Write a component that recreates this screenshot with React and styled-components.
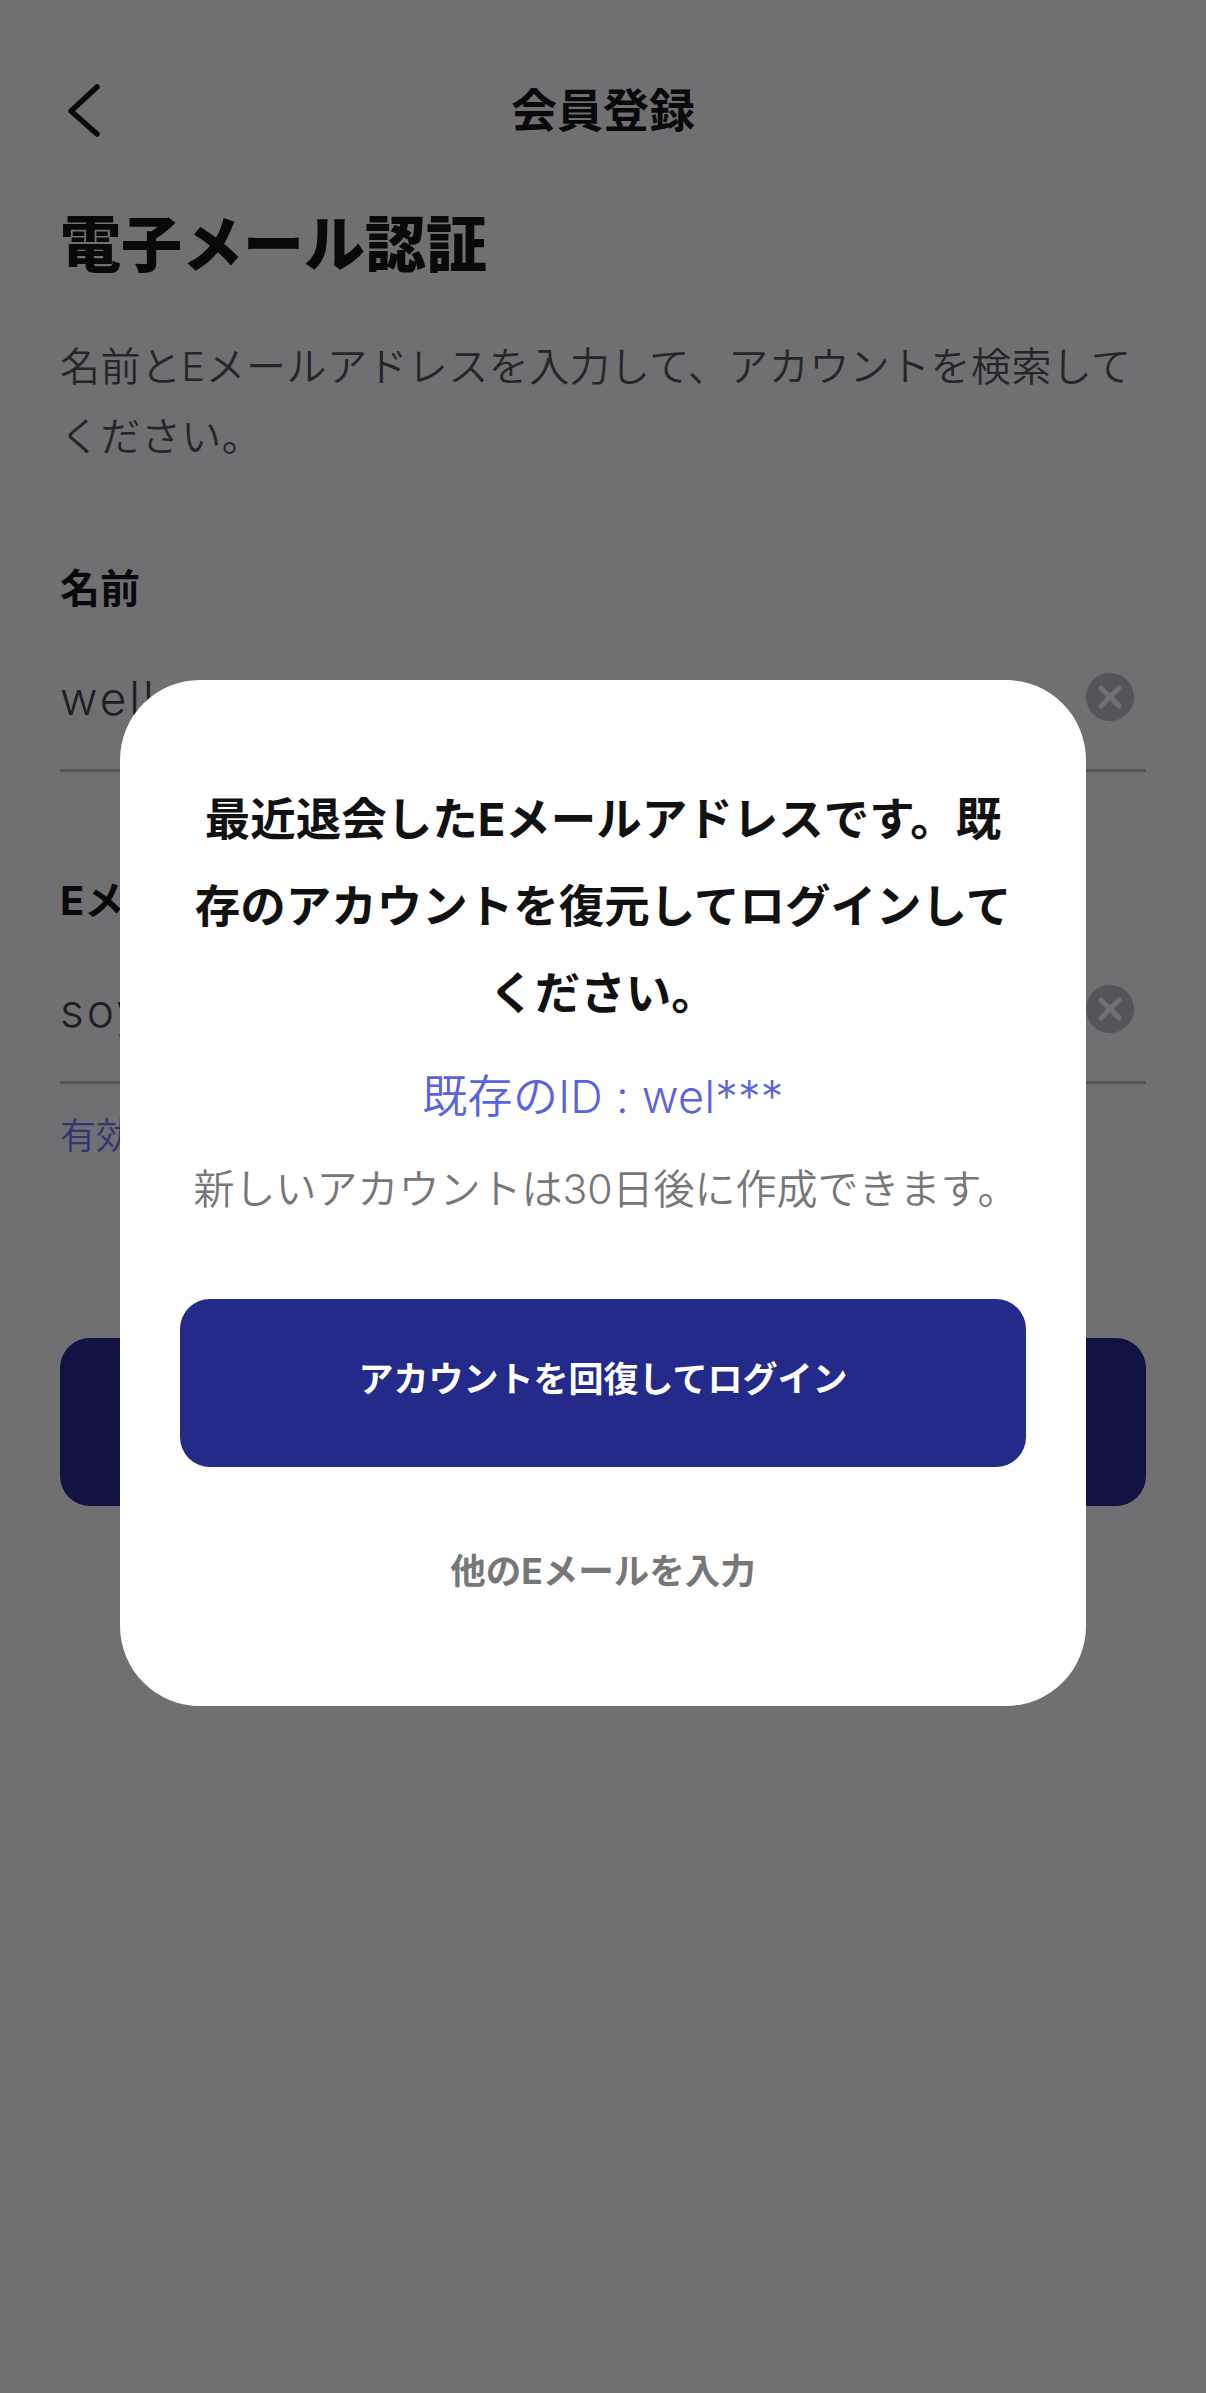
import React from 'react';
import styled, { createGlobalStyle } from 'styled-components';

const Global = createGlobalStyle`
  html, body { margin: 0; padding: 0; background: #fff; }
  * { box-sizing: border-box; }
  body { font-family: "Inter", "Noto Sans CJK JP", "Noto Sans", sans-serif; color: #111; }
`;

const Page = styled.div`
  position: relative;
  width: 1206px;
  height: 2393px;
  padding: 0 60px;
  background: #fff;
  overflow: hidden;
`;
const Header = styled.header`
  height: 90px;
  margin-top: 65px;
  display: grid;
  grid-template-columns: 80px 1fr 80px;
  align-items: center;
  margin-left: -60px;
  margin-right: -60px;
  padding: 0 60px;
`;
const BackIcon = styled.svg`
  width: 50px;
  height: 60px;
  display: block;
`;
const HeaderTitle = styled.h1`
  margin: 0;
  text-align: center;
  font-size: 46px;
  line-height: 90px;
  font-weight: 700;
  color: #111;
`;
const Heading = styled.h2`
  margin: 45px 0 0;
  font-size: 61px;
  line-height: 90px;
  font-weight: 900;
  color: #111;
`;
const Sub = styled.p`
  margin: 42px 0 0;
  font-size: 40px;
  line-height: 70px;
  font-weight: 350;
  color: #555;
  letter-spacing: 0.45px;
`;
const Field = styled.div`
  margin-top: ${p => p.$top}px;
`;
const Label = styled.div`
  font-size: 40px;
  line-height: 56px;
  font-weight: 700;
  color: #111;
`;
const InputRow = styled.div`
  height: 146px;
  display: flex;
  align-items: center;
  justify-content: space-between;
  padding-right: 12px;
  border-bottom: 3px solid #c0c0c0;
  margin-top: 9px;
`;
const Value = styled.span`
  font-family: "Inter", sans-serif;
  font-size: 46px;
  font-weight: 300;
  color: #444;
  letter-spacing: 3px;
`;
const ClearIcon = styled.svg`
  width: 48px;
  height: 48px;
  display: block;
  margin-top: -2px;
`;
const Hint = styled.div`
  margin-top: 25px;
  font-size: 36px;
  line-height: 54px;
  font-weight: 350;
  color: #7078ff;
`;
const PrimaryBack = styled.button`
  display: block;
  width: 100%;
  height: 168px;
  margin-top: 175px;
  border: 0;
  border-radius: 30px;
  background: #242a8a;
  color: #fff;
  font: 700 36px "Noto Sans CJK JP", sans-serif;
`;
const Overlay = styled.div`
  position: absolute;
  inset: 0;
  background: rgba(4, 4, 8, 0.57);
  display: flex;
  justify-content: center;
  align-items: flex-start;
  padding-top: 680px;
`;
const Modal = styled.div`
  width: 966px;
  height: 1026px;
  padding: 96px 60px 0;
  background: #fff;
  border-radius: 80px;
  text-align: center;
`;
const ModalTitle = styled.div`
  padding: 0 6px;
  font-size: 45.5px;
  line-height: 87px;
  font-weight: 700;
  color: #111;
`;
const ExistingId = styled.div`
  margin-top: 25px;
  font-size: 45px;
  line-height: 70px;
  font-weight: 350;
  color: #5a63dc;
  letter-spacing: 0.3px;
`;
const Note = styled.div`
  margin-top: 22px;
  padding-left: 6px;
  font-size: 41px;
  line-height: 70px;
  font-weight: 350;
  color: #777;
  white-space: nowrap;
`;
const ModalButton = styled.button`
  display: block;
  width: 100%;
  height: 168px;
  margin-top: 75px;
  padding: 0 0 13px;
  border: 0;
  border-radius: 30px;
  background: #242a8a;
  color: #fff;
  font: 700 35px "Inter", "Noto Sans CJK JP", sans-serif;
`;
const TextButton = styled.button`
  display: block;
  width: 100%;
  margin-top: 75px;
  padding: 0;
  border: 0;
  background: none;
  color: #777;
  font: 700 35.5px/60px "Inter", "Noto Sans CJK JP", sans-serif;
`;

const Clear = () => (
  <ClearIcon viewBox="0 0 48 48">
    <circle cx="24" cy="24" r="24" fill="#c0c0c4" />
    <path d="M15 15 L33 33 M33 15 L15 33" stroke="#fff" strokeWidth="5" strokeLinecap="round" />
  </ClearIcon>
);

export default function App() {
  return (
    <Page>
      <Global />
      <Header>
        <BackIcon viewBox="0 0 50 60">
          <path d="M37 7 L11 31 L37 54" fill="none" stroke="#111" strokeWidth="5.5" strokeLinecap="round" strokeLinejoin="round" />
        </BackIcon>
        <HeaderTitle>会員登録</HeaderTitle>
        <span />
      </Header>
      <Heading>電子メール認証</Heading>
      <Sub>名前とEメールアドレスを入力して、アカウントを検索してください。</Sub>
      <Field $top={89}>
        <Label>名前</Label>
        <InputRow>
          <Value>wellness</Value>
          <Clear />
        </InputRow>
      </Field>
      <Field $top={101}>
        <Label>Eメール</Label>
        <InputRow>
          <Value>soyeon</Value>
          <Clear />
        </InputRow>
        <Hint>有効なEメールアドレスです。</Hint>
      </Field>
      <PrimaryBack>次へ</PrimaryBack>
      <Overlay>
        <Modal>
          <ModalTitle>最近退会したEメールアドレスです。既存のアカウントを復元してログインしてください。</ModalTitle>
          <ExistingId>既存のID : wel***</ExistingId>
          <Note>新しいアカウントは30日後に作成できます。</Note>
          <ModalButton>アカウントを回復してログイン</ModalButton>
          <TextButton>他のEメールを入力</TextButton>
        </Modal>
      </Overlay>
    </Page>
  );
}
